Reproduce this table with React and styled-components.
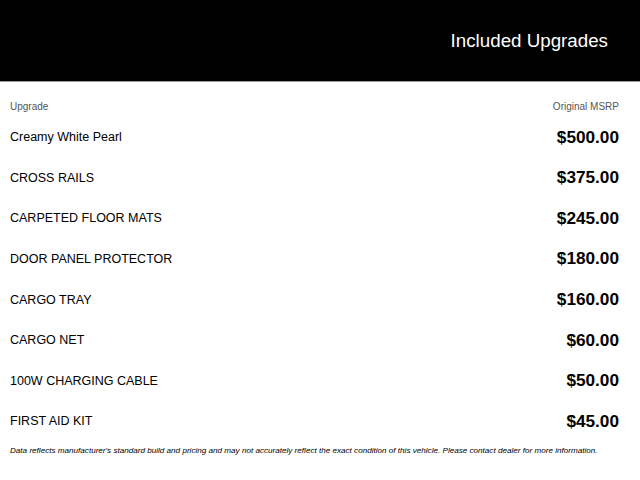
import React from 'react';
import styled, { createGlobalStyle } from 'styled-components';

const GlobalStyle = createGlobalStyle`
  body {
    margin: 0;
    background: #fff;
    font-family: "Liberation Sans", Arial, sans-serif;
  }
`;

const Page = styled.div`
  width: 640px;
`;

const Banner = styled.header`
  height: 81px;
  background: #000;
  border-bottom: 1px solid #9a9a9a;
  display: flex;
  align-items: center;
  justify-content: flex-end;
  padding-right: 32px;
`;

const Title = styled.h1`
  margin: 0;
  color: #fff;
  font-size: 18.75px;
  font-weight: 400;
  line-height: 22px;
`;

const Table = styled.div`
  padding: 0 21px 0 10px;
`;

const ColHead = styled.div`
  display: flex;
  justify-content: space-between;
  padding: 19px 0 4px;
  font-size: 10px;
  line-height: 12px;
  color: #555;
`;

const Row = styled.div`
  display: flex;
  justify-content: space-between;
  align-items: center;
  height: 40.57px;
`;

const Name = styled.span`
  font-size: 12.5px;
  color: #000;
`;

const Price = styled.span`
  font-size: 17.2px;
  font-weight: 700;
  color: #000;
`;

const Note = styled.p`
  margin: 4px 0 0;
  font-size: 8.12px;
  line-height: 10px;
  font-style: italic;
  color: #000;
`;

const upgrades = [
  ['Creamy White Pearl', '$500.00'],
  ['CROSS RAILS', '$375.00'],
  ['CARPETED FLOOR MATS', '$245.00'],
  ['DOOR PANEL PROTECTOR', '$180.00'],
  ['CARGO TRAY', '$160.00'],
  ['CARGO NET', '$60.00'],
  ['100W CHARGING CABLE', '$50.00'],
  ['FIRST AID KIT', '$45.00'],
];

export default function App() {
  return (
    <Page>
      <GlobalStyle />
      <Banner>
        <Title>Included Upgrades</Title>
      </Banner>
      <Table>
        <ColHead>
          <span>Upgrade</span>
          <span>Original MSRP</span>
        </ColHead>
        {upgrades.map(([name, price]) => (
          <Row key={name}>
            <Name>{name}</Name>
            <Price>{price}</Price>
          </Row>
        ))}
        <Note>
          Data reflects manufacturer's standard build and pricing and may not accurately reflect the exact condition of this vehicle. Please contact dealer for more information.
        </Note>
      </Table>
    </Page>
  );
}
